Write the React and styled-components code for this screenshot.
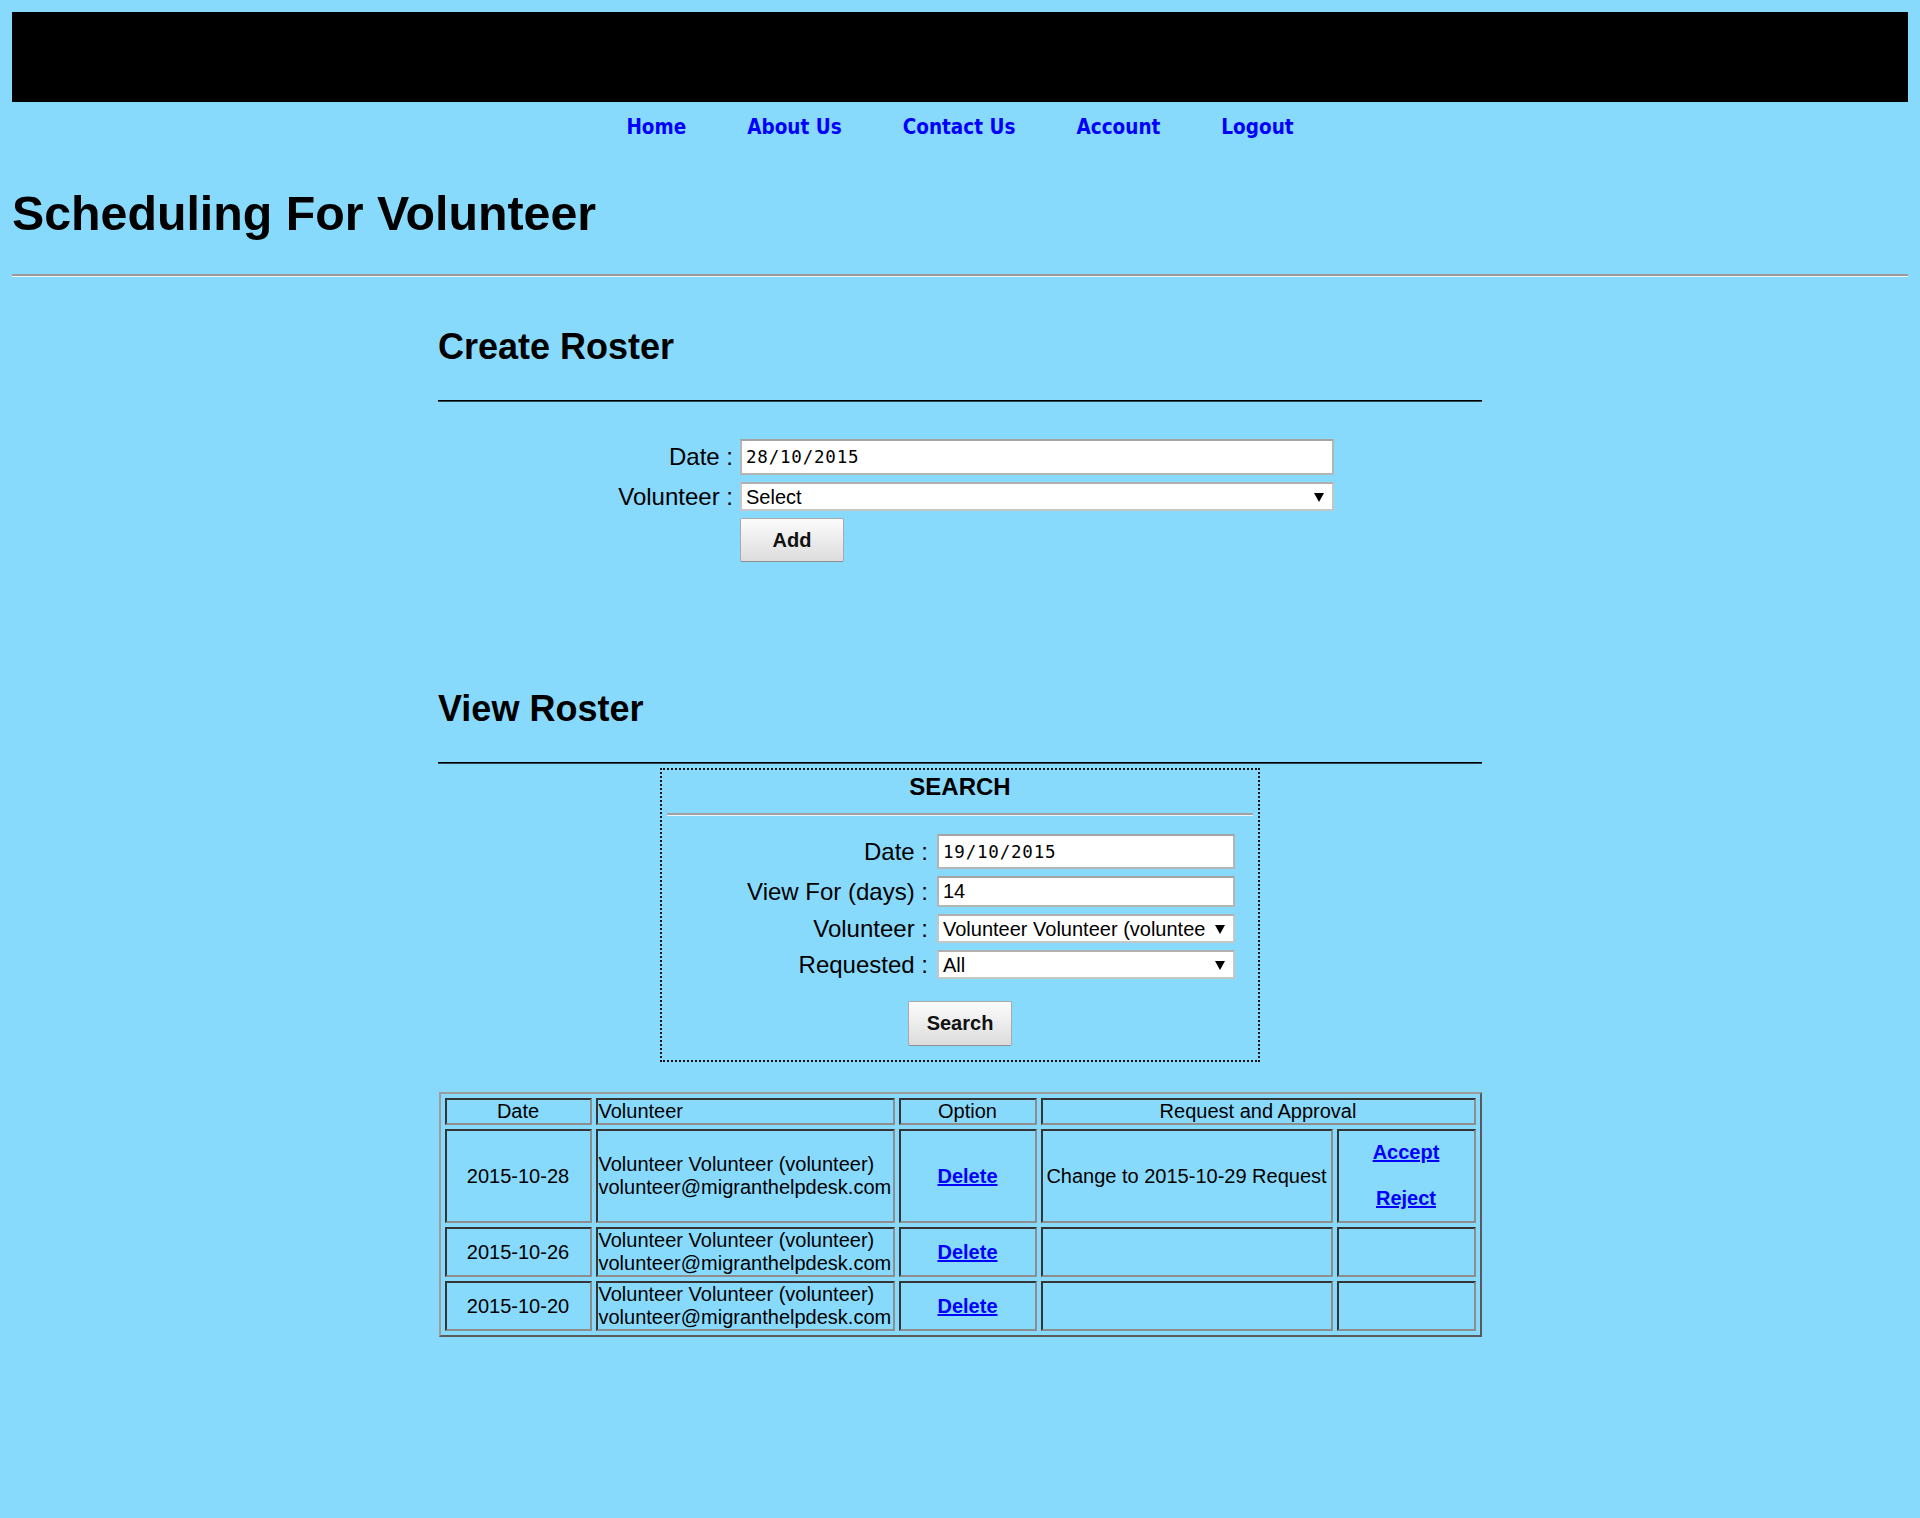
import React from 'react';
import styled, { createGlobalStyle } from 'styled-components';

const GlobalStyle = createGlobalStyle`
  html, body {
    margin: 0;
    padding: 0;
  }
  body {
    background: #88dafd;
    color: #000;
    font-family: "Liberation Sans", Arial, sans-serif;
  }
`;

const Page = styled.div`
  padding: 12px;
`;

const Banner = styled.div`
  height: 90px;
  background: #000;
`;

const NavList = styled.ul`
  list-style: none;
  margin: 14px 0 0;
  padding: 0;
  display: flex;
  justify-content: center;
  gap: 61px;
`;

const NavLink = styled.a`
  font-family: "DejaVu Sans Condensed", "DejaVu Sans", Verdana, sans-serif;
  font-stretch: condensed;
  font-weight: bold;
  font-size: 20.5px;
  line-height: 22px;
  color: #0000ff;
  text-decoration: none;
  cursor: pointer;
`;

const PageTitle = styled.h1`
  margin: 48px 0 0;
  font-size: 48.3px;
  line-height: 55px;
  font-weight: bold;
`;

const PageRule = styled.hr`
  margin: 33px 0 0;
  height: 0;
  border: 0;
  border-top: 2px solid #9a9a9a;
  border-bottom: 1px solid #eef4f8;
`;

const Content = styled.div`
  width: 1044px;
  margin: 0 auto;
`;

const SectionTitle = styled.h2`
  margin: ${props => props.$top}px 0 0;
  font-size: 36px;
  line-height: 41px;
  font-weight: bold;
`;

const SectionLine = styled.div`
  margin-top: 33px;
  height: 0;
  border-top: 1px solid #000;
  border-bottom: 1px solid #2c4a58;
`;

const FormGrid = styled.div`
  display: grid;
  grid-template-columns: ${props => props.$cols};
  column-gap: ${props => props.$gap}px;
  row-gap: 7px;
  align-items: center;
  margin-top: ${props => props.$top}px;
  padding-right: ${props => props.$right || 0}px;
`;

const Label = styled.label`
  text-align: right;
  font-size: 24px;
  line-height: 28px;
  white-space: nowrap;
`;

const ActionCell = styled.div`
  grid-column: 2;
`;

const TextInput = styled.input`
  box-sizing: border-box;
  width: 100%;
  height: ${props => props.$h}px;
  margin: 0;
  padding: 0 4px;
  border: 2px solid #b5b5b5;
  border-top-color: #a4a4a4;
  background: #fff;
  color: #000;
  font-family: ${props => (props.$mono ? '"DejaVu Sans Mono", monospace' : '"Liberation Sans", Arial, sans-serif')};
  font-size: ${props => (props.$mono ? '17.5px' : '20px')};
  letter-spacing: ${props => (props.$mono ? '0.8px' : 'normal')};
  outline: none;
`;

const SelectWrap = styled.span`
  position: relative;
  display: block;

  &::after {
    content: '';
    position: absolute;
    right: 10px;
    top: 50%;
    margin-top: -4px;
    border-left: 5px solid transparent;
    border-right: 5px solid transparent;
    border-top: 9px solid #000;
    pointer-events: none;
  }
`;

const Select = styled.select`
  appearance: none;
  -webkit-appearance: none;
  box-sizing: border-box;
  display: block;
  width: 100%;
  height: 29px;
  margin: 0;
  padding: 0 28px 0 4px;
  border: 2px solid #c6c6c6;
  border-top-color: #b0b0b0;
  border-radius: 0;
  background: #fff;
  color: #000;
  font-family: "Liberation Sans", Arial, sans-serif;
  font-size: 20px;
  outline: none;
`;

const Button = styled.button`
  box-sizing: border-box;
  width: 104px;
  height: ${props => props.$h}px;
  margin: 0;
  padding: 0;
  border: 1px solid #a9a9a9;
  border-bottom-color: #8f8f8f;
  border-radius: 2px;
  background: linear-gradient(#fcfcfc, #dcdcdc);
  color: #111;
  font-family: "Liberation Sans", Arial, sans-serif;
  font-size: 20px;
  font-weight: bold;
  cursor: pointer;
`;

const SearchBox = styled.div`
  box-sizing: border-box;
  width: 600px;
  margin: 4px auto 0;
  padding: 3px 5px 14px;
  border: 2px dotted #111;
`;

const SearchTitle = styled.div`
  text-align: center;
  font-size: 24px;
  line-height: 28px;
  font-weight: bold;
`;

const InnerRule = styled.hr`
  margin: 12px 0 0;
  height: 0;
  border: 0;
  border-top: 2px solid #a0a0a0;
  border-bottom: 1px solid #eef4f8;
`;

const ButtonRow = styled.div`
  display: flex;
  justify-content: center;
  margin-top: 22px;
`;

const RosterTable = styled.table`
  width: 1042px;
  margin: 30px auto 0;
  table-layout: fixed;
  border-collapse: separate;
  border-spacing: 4px;
  border: 2px solid;
  border-color: #9c9c9c #5a5a5a #5a5a5a #9c9c9c;
  font-size: 20px;
  line-height: 23px;
`;

const Col = styled.col`
  width: ${props => props.$w}px;
`;

const Cell = styled.td`
  box-sizing: border-box;
  padding: ${props => props.$pad || '0 1px'};
  border: 2px solid;
  border-color: #343434 #8d8d8d #8d8d8d #343434;
  text-align: ${props => props.$align || 'left'};
  vertical-align: middle;
  white-space: nowrap;
`;

const TableLink = styled.a`
  color: #0000ff;
  font-weight: bold;
  text-decoration: underline;
  cursor: pointer;
`;

const rosters = [
  { date: '2015-10-28', request: 'Change to 2015-10-29 Request', pending: true },
  { date: '2015-10-26', request: '', pending: false },
  { date: '2015-10-20', request: '', pending: false },
];

const navItems = ['Home', 'About Us', 'Contact Us', 'Account', 'Logout'];

const App = () => {
  return (
    <Page>
      <GlobalStyle />
      <Banner />
      <NavList>
        {navItems.map(item => (
          <li key={item}>
            <NavLink>{item}</NavLink>
          </li>
        ))}
      </NavList>

      <PageTitle>Scheduling For Volunteer</PageTitle>
      <PageRule />

      <Content>
        <SectionTitle $top={49}>Create Roster</SectionTitle>
        <SectionLine />
        <FormGrid $cols="295px 594px" $gap={7} $top={37}>
          <Label>Date :</Label>
          <TextInput $h={36} $mono defaultValue="28/10/2015" />
          <Label>Volunteer :</Label>
          <SelectWrap>
            <Select defaultValue="">
              <option value="">Select</option>
              <option value="volunteer">Volunteer Volunteer (volunteer)</option>
            </Select>
          </SelectWrap>
          <ActionCell>
            <Button $h={44}>Add</Button>
          </ActionCell>
        </FormGrid>

        <SectionTitle $top={126}>View Roster</SectionTitle>
        <SectionLine />
        <SearchBox>
          <SearchTitle>SEARCH</SearchTitle>
          <InnerRule />
          <FormGrid $cols="1fr 298px" $gap={9} $top={18} $right={18}>
            <Label>Date :</Label>
            <TextInput $h={35} $mono defaultValue="19/10/2015" />
            <Label>View For (days) :</Label>
            <TextInput $h={31} defaultValue="14" />
            <Label>Volunteer :</Label>
            <SelectWrap>
              <Select defaultValue="volunteer">
                <option value="volunteer">Volunteer Volunteer (volunteer)</option>
              </Select>
            </SelectWrap>
            <Label>Requested :</Label>
            <SelectWrap>
              <Select defaultValue="all">
                <option value="all">All</option>
                <option value="yes">Yes</option>
                <option value="no">No</option>
              </Select>
            </SelectWrap>
          </FormGrid>
          <ButtonRow>
            <Button $h={45}>Search</Button>
          </ButtonRow>
        </SearchBox>

        <RosterTable>
          <colgroup>
            <Col $w={147} />
            <Col $w={299} />
            <Col $w={138} />
            <Col $w={292} />
            <Col $w={139} />
          </colgroup>
          <tbody>
            <tr>
              <Cell $align="center">Date</Cell>
              <Cell>Volunteer</Cell>
              <Cell $align="center">Option</Cell>
              <Cell $align="center" colSpan={2}>Request and Approval</Cell>
            </tr>
            {rosters.map(row => (
              <tr key={row.date}>
                <Cell $align="center">{row.date}</Cell>
                <Cell>
                  Volunteer Volunteer (volunteer)
                  <br />
                  volunteer@migranthelpdesk.com
                </Cell>
                <Cell $align="center">
                  <TableLink>Delete</TableLink>
                </Cell>
                <Cell $align="center">{row.request}</Cell>
                <Cell $align="center" $pad={row.pending ? '10px 2px 11px' : '0 1px'}>
                  {row.pending && (
                    <>
                      <TableLink>Accept</TableLink>
                      <br />
                      <br />
                      <TableLink>Reject</TableLink>
                    </>
                  )}
                </Cell>
              </tr>
            ))}
          </tbody>
        </RosterTable>
      </Content>
    </Page>
  );
};

export default App;
